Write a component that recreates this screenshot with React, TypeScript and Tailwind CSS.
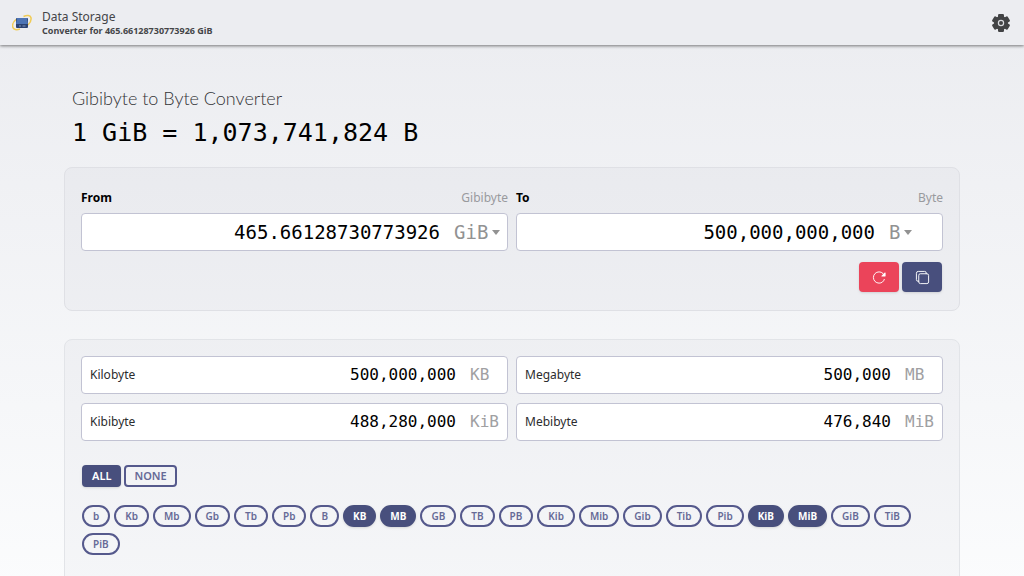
import React, { useState } from "react";
import { IoCopyOutline, IoReload } from "react-icons/io5";

type Unit = {
  symbol: string;
  name: string;
  bytes: number;
};

const units: Unit[] = [
  { symbol: "b", name: "Bit", bytes: 1 / 8 },
  { symbol: "Kb", name: "Kilobit", bytes: 1e3 / 8 },
  { symbol: "Mb", name: "Megabit", bytes: 1e6 / 8 },
  { symbol: "Gb", name: "Gigabit", bytes: 1e9 / 8 },
  { symbol: "Tb", name: "Terabit", bytes: 1e12 / 8 },
  { symbol: "Pb", name: "Petabit", bytes: 1e15 / 8 },
  { symbol: "B", name: "Byte", bytes: 1 },
  { symbol: "KB", name: "Kilobyte", bytes: 1e3 },
  { symbol: "MB", name: "Megabyte", bytes: 1e6 },
  { symbol: "GB", name: "Gigabyte", bytes: 1e9 },
  { symbol: "TB", name: "Terabyte", bytes: 1e12 },
  { symbol: "PB", name: "Petabyte", bytes: 1e15 },
  { symbol: "Kib", name: "Kibibit", bytes: 2 ** 10 / 8 },
  { symbol: "Mib", name: "Mebibit", bytes: 2 ** 20 / 8 },
  { symbol: "Gib", name: "Gibibit", bytes: 2 ** 30 / 8 },
  { symbol: "Tib", name: "Tebibit", bytes: 2 ** 40 / 8 },
  { symbol: "Pib", name: "Pebibit", bytes: 2 ** 50 / 8 },
  { symbol: "KiB", name: "Kibibyte", bytes: 2 ** 10 },
  { symbol: "MiB", name: "Mebibyte", bytes: 2 ** 20 },
  { symbol: "GiB", name: "Gibibyte", bytes: 2 ** 30 },
  { symbol: "TiB", name: "Tebibyte", bytes: 2 ** 40 },
  { symbol: "PiB", name: "Pebibyte", bytes: 2 ** 50 },
];

const findUnit = (symbol: string) =>
  units.find((unit) => unit.symbol === symbol) ?? units[0];

// Keep five significant digits
const format = (value: number) =>
  Number(value.toPrecision(5)).toLocaleString("en-US", {
    maximumFractionDigits: 10,
  });

type FieldProps = {
  id: string;
  label: string;
  unit: Unit;
  value: string;
  readOnly?: boolean;
  onValue?: (value: string) => void;
  onUnit: (symbol: string) => void;
};

const Field: React.FC<FieldProps> = ({
  id,
  label,
  unit,
  value,
  readOnly,
  onValue,
  onUnit,
}) => (
  <div className="min-w-0">
    <div className="flex justify-between text-xs leading-[19px]">
      <label htmlFor={id} className="font-bold text-black">
        {label}
      </label>
      <span className="text-[#999a9e]">{unit.name}</span>
    </div>
    <div className="mt-1.5 flex h-[38px] items-center rounded border border-[#c2c3d3] bg-white font-['DejaVu_Sans_Mono',monospace] text-[19px]">
      <input
        id={id}
        value={value}
        readOnly={readOnly}
        onChange={(e) => onValue?.(e.target.value)}
        className="min-w-0 flex-1 bg-transparent text-right text-black outline-none"
      />
      <div className="ml-3.5 flex w-[53px] items-center gap-1 text-[#929292]">
        <select
          aria-label={`${label} unit`}
          value={unit.symbol}
          onChange={(e) => onUnit(e.target.value)}
          className="field-sizing-content appearance-none bg-transparent outline-none"
        >
          {units.map((u) => (
            <option key={u.symbol}>{u.symbol}</option>
          ))}
        </select>
        <svg viewBox="0 0 8 5" className="w-2 shrink-0" fill="currentColor">
          <path d="M0 0h8L4 5z" />
        </svg>
      </div>
    </div>
  </div>
);

const Logo: React.FC = () => (
  <svg viewBox="0 0 20 18" className="w-5" fill="none">
    <path
      d="M4 5.500C1.500 7.500.2 10.800.8 13.200c.6 2.500 3.800 3 7.200 1.800"
      stroke="#f0cb55"
      strokeWidth="1.500"
    />
    <path
      d="M11.500 2.500c3.500-1.500 6.800-1.200 7.400 1 .6 2.300-.6 5.200-2.900 7.500"
      stroke="#f0cb55"
      strokeWidth="1.500"
    />
    <rect x="4" y="4" width="12" height="10" rx="1" fill="#2b4272" />
    <path d="M5 4h10l1 6H4z" fill="#4d74b5" />
    <path d="M7 12h2M10.500 12h3" stroke="#8296bd" />
  </svg>
);

const Gear: React.FC = () => (
  <svg viewBox="0 0 18 18" className="w-[18px]" fill="currentColor">
    <circle cx="9" cy="9" r="7" />
    <rect x="6" y="0" width="6" height="18" rx="1.200" />
    <rect x="6" y="0" width="6" height="18" rx="1.200" transform="rotate(60 9 9)" />
    <rect x="6" y="0" width="6" height="18" rx="1.200" transform="rotate(120 9 9)" />
    <circle cx="9" cy="9" r="2.600" fill="none" stroke="#d9dade" strokeWidth="1.200" />
  </svg>
);

const App: React.FC = () => {
  const [amount, setAmount] = useState("465.66128730773926");
  const [from, setFrom] = useState("GiB");
  const [to, setTo] = useState("B");
  const [selected, setSelected] = useState(["KB", "MB", "KiB", "MiB"]);

  const fromUnit = findUnit(from);
  const toUnit = findUnit(to);
  const bytes = (Number(amount.replace(/,/g, "")) || 0) * fromUnit.bytes;
  const result = format(bytes / toUnit.bytes);
  const ratio = (fromUnit.bytes / toUnit.bytes).toLocaleString("en-US");

  const toggle = (symbol: string) =>
    setSelected((current) =>
      current.includes(symbol)
        ? current.filter((s) => s !== symbol)
        : [...current, symbol]
    );

  return (
    <div className="min-h-screen bg-linear-to-b from-[#ebecf0] to-[#fbfcfd] font-['Noto_Sans',sans-serif]">
      <header className="flex h-[45px] items-center justify-between bg-[#ecedf1] pr-3.5 pl-3 shadow-[0_1px_3px_rgba(0,0,0,0.5)]">
        <div className="flex items-center gap-2.5 text-[#444548]">
          <Logo />
          <div>
            <div className="text-xs leading-4">Data Storage</div>
            <div className="text-[9px] leading-3 font-bold">
              Converter for {amount} {from}
            </div>
          </div>
        </div>
        <button aria-label="Settings" className="text-[#424345]">
          <Gear />
        </button>
      </header>

      <main className="px-16 pt-[39px]">
        <div className="px-2">
          <h1 className="font-[Lato,sans-serif] text-lg leading-7 font-light text-[#333437]">
            {fromUnit.name} to {toUnit.name} Converter
          </h1>
          <p className="font-['DejaVu_Sans_Mono',monospace] text-[25px] leading-[42px] text-black">
            1 {from} = {ratio} {to}
          </p>
        </div>

        <section className="mt-[13px] rounded-lg border border-[#dfe0e5] bg-[#3c466e]/3 px-4 pt-5 pb-[18px]">
          <div className="grid grid-cols-2 gap-2">
            <Field
              id="from"
              label="From"
              unit={fromUnit}
              value={amount}
              onValue={setAmount}
              onUnit={setFrom}
            />
            <Field
              id="to"
              label="To"
              unit={toUnit}
              value={result}
              readOnly
              onUnit={setTo}
            />
          </div>
          <div className="mt-[11px] flex justify-end gap-[3px] pr-px">
            <button
              aria-label="Reset"
              onClick={() => setAmount("1")}
              className="flex h-[30px] w-10 items-center justify-center rounded bg-[#eb445a] text-white shadow"
            >
              <IoReload size={15} />
            </button>
            <button
              aria-label="Copy"
              onClick={() => navigator.clipboard.writeText(result)}
              className="flex h-[30px] w-10 items-center justify-center rounded bg-[#484f7d] text-white shadow"
            >
              <IoCopyOutline size={15} />
            </button>
          </div>
        </section>

        <section className="mt-7 rounded-lg border border-[#e2e4e8] bg-[#3c466e]/3 px-4 pt-4 pb-8">
          <div className="grid grid-cols-2 gap-x-2 gap-y-[9px]">
            {units
              .filter((unit) => selected.includes(unit.symbol))
              .map((unit) => (
                <div
                  key={unit.symbol}
                  className="flex h-[38px] items-center rounded border border-[#c2c3d3] bg-white pl-2"
                >
                  <label
                    htmlFor={`unit-${unit.symbol}`}
                    className="text-xs text-[#2c2c2e]"
                  >
                    {unit.name}
                  </label>
                  <input
                    id={`unit-${unit.symbol}`}
                    value={format(bytes / unit.bytes)}
                    readOnly
                    className="min-w-0 flex-1 bg-transparent text-right font-['DejaVu_Sans_Mono',monospace] text-base text-black outline-none"
                  />
                  <span className="ml-3.5 w-[37px] font-['DejaVu_Sans_Mono',monospace] text-base text-[#a0a0a2]">
                    {unit.symbol}
                  </span>
                </div>
              ))}
          </div>

          <div className="mt-6 flex gap-[3px] pl-px text-[11px] leading-[18px]">
            <button
              onClick={() => setSelected(units.map((unit) => unit.symbol))}
              className="rounded-sm border-2 border-[#484f7d] bg-[#484f7d] px-2 font-semibold text-white shadow"
            >
              ALL
            </button>
            <button
              onClick={() => setSelected([])}
              className="rounded-sm border-2 border-[#55598c] px-2 font-semibold text-[#666a96]"
            >
              NONE
            </button>
          </div>

          <div className="mt-[18px] flex flex-wrap gap-x-1 gap-y-1.5 pl-px text-[10px] leading-[18px]">
            {units.map((unit) => (
              <button
                key={unit.symbol}
                onClick={() => toggle(unit.symbol)}
                className={
                  selected.includes(unit.symbol)
                    ? "rounded-full border-2 border-[#484f7d] bg-[#484f7d] px-2 font-bold text-white shadow"
                    : "rounded-full border-2 border-[#55598c] px-[9px] font-semibold text-[#666a96]"
                }
              >
                {unit.symbol}
              </button>
            ))}
          </div>
        </section>
      </main>
    </div>
  );
};

export default App;
